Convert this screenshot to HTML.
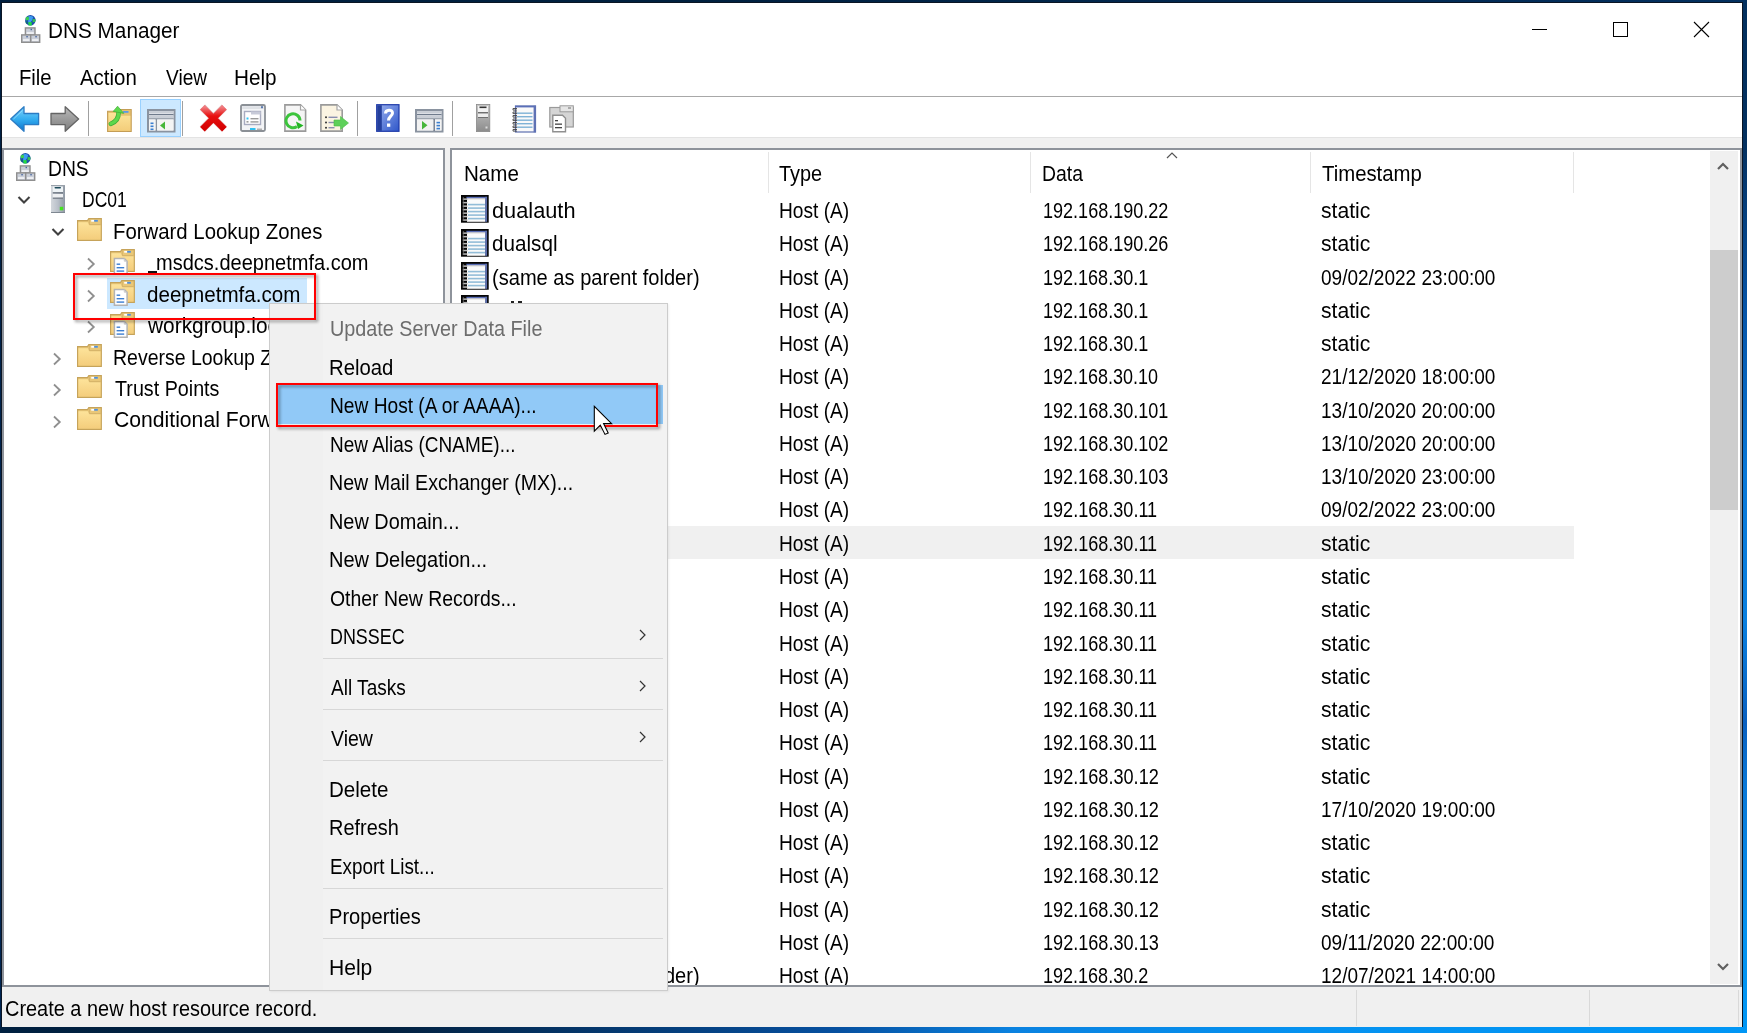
<!DOCTYPE html>
<html><head><meta charset="utf-8">
<style>
*{margin:0;padding:0;box-sizing:border-box}
html,body{width:1747px;height:1033px;overflow:hidden}
body{position:relative;background:linear-gradient(to bottom,#001f3f 0%,#002450 50%,#002552 100%);font-family:"Liberation Sans",sans-serif;color:#000}
.a{position:absolute}
.t{position:absolute;font-size:21.5px;line-height:20px;white-space:nowrap;transform-origin:0 0}
#win{position:absolute;left:2px;top:3px;width:1740px;height:1024px;background:#fff;overflow:hidden}
.vsep{position:absolute;width:1px;background:#a0a0a0}
.ricon{position:absolute;left:460.8px;width:28px;height:28px}
.hover{position:absolute;left:452px;width:1122px;height:33.3px;background:#f0f0f0}
.msep{position:absolute;left:323px;width:340px;height:1px;background:#d7d7d7}
</style></head><body>
<svg width="0" height="0" style="position:absolute">
<defs>
<symbol id="rec" viewBox="0 0 28 28">
 <rect x="0" y="0" width="27.7" height="27.7" fill="#050505"/>
 <rect x="5.4" y="1.8" width="20.6" height="1.8" fill="#5a6eb6"/>
 <rect x="24.1" y="1.8" width="2" height="25" fill="#5d6fae"/>
 <rect x="6" y="3.5" width="18.1" height="23.3" fill="#fbfbfb"/>
 <rect x="6" y="3.5" width="18.1" height="1.2" fill="#e3e3e3"/>
 <g fill="#93bdd8"><rect x="7" y="8.8" width="17" height="1.6"/><rect x="7" y="12.3" width="17" height="1.6"/><rect x="7" y="15.8" width="17" height="1.6"/><rect x="7" y="19.3" width="17" height="1.6"/><rect x="7" y="22.8" width="17" height="1.6"/></g>
 <g fill="#b9b9b9"><rect x="1.8" y="3.4" width="4.6" height="1.5"/><rect x="1.8" y="6.9" width="4.6" height="1.5"/><rect x="1.8" y="10.4" width="4.6" height="1.5"/><rect x="1.8" y="13.9" width="4.6" height="1.5"/><rect x="1.8" y="17.4" width="4.6" height="1.5"/><rect x="1.8" y="20.8" width="4.6" height="1.5"/><rect x="1.8" y="24.3" width="4.6" height="1.5"/></g>
 <rect x="1.8" y="2" width="1.2" height="24" fill="#7a7a7a" opacity="0.6"/>
</symbol>
<linearGradient id="gfold" x1="0" y1="0" x2="0" y2="1"><stop offset="0" stop-color="#fde39a"/><stop offset="1" stop-color="#f4cd7c"/></linearGradient>
<symbol id="folder" viewBox="0 0 25 23">
 <path d="M0.6 2.6 L10.5 2.6 L11.8 0.6 L24.3 0.6 L24.3 22.4 L0.6 22.4 Z" fill="#e9c778" stroke="#c6a35a" stroke-width="1.2"/>
 <path d="M1.4 4.2 L10.8 4.2 L12.6 7.2 L23.5 7.2 L23.5 21.6 L1.4 21.6 Z" fill="url(#gfold)"/>
 <path d="M12.3 1.2 L12.3 6.6 L23.6 6.6" fill="none" stroke="#d2b068" stroke-width="0.9"/>
 <rect x="14.2" y="1.9" width="3" height="1.8" fill="#fff"/>
 <rect x="17.2" y="1.9" width="3.6" height="1.8" fill="#4a90e2"/>
</symbol>
<symbol id="zone" viewBox="0 0 25 26">
 <path d="M0.6 2.6 L10.5 2.6 L11.8 0.6 L24.3 0.6 L24.3 22.4 L0.6 22.4 Z" fill="#e9c778" stroke="#c6a35a" stroke-width="1.2"/>
 <path d="M1.4 4.2 L10.8 4.2 L12.6 7.2 L23.5 7.2 L23.5 21.6 L1.4 21.6 Z" fill="url(#gfold)"/>
 <path d="M12.3 1.2 L12.3 6.6 L23.6 6.6" fill="none" stroke="#d2b068" stroke-width="0.9"/>
 <rect x="14.2" y="1.9" width="3" height="1.8" fill="#fff"/>
 <rect x="17.2" y="1.9" width="3.6" height="1.8" fill="#4a90e2"/>
 <path d="M4.4 9.4 L14.3 9.4 L17.1 12.2 L17.1 25.3 L4.4 25.3 Z" fill="#fff" stroke="#b3b3b3" stroke-width="1.5"/>
 <path d="M14.3 9.4 L14.3 12.2 L17.1 12.2" fill="none" stroke="#c8c8c8" stroke-width="1"/>
 <g fill="#3d7fd2"><rect x="6.6" y="14.5" width="3.6" height="1.4"/><rect x="6.6" y="18" width="7.6" height="1.4"/><rect x="6.6" y="21.4" width="7.6" height="1.4"/></g>
</symbol>
<symbol id="dnsico" viewBox="0 0 20 28">
 <circle cx="9.4" cy="5.3" r="5.2" fill="#1e4fae"/>
 <path d="M7.5 1.2 Q10.5 0.6 12.2 2 L11.2 5.2 Q9.6 6.2 9.6 8.2 L8 9.8 Q6.8 7.5 7.2 4.6 Z" fill="#3c9cf0"/>
 <path d="M4.6 2.6 L7.6 1.6 L8 4.8 L5 5.6 Z" fill="#3bd14e"/>
 <path d="M11.6 4 L14.5 4.3 L14.2 7 L11.6 7.2 Z" fill="#35c24e"/>
 <path d="M7.2 7.2 L10.6 7 L10.8 10.4 L7.6 10.4 Z" fill="#22dc3c"/>
 <path d="M4.3 6 L6.5 7 L6.2 9.2 L4.8 8.2Z" fill="#0f6a7a"/>
 <rect x="4.4" y="12.9" width="9.6" height="7.2" fill="#c9ced8" stroke="#8f8f8f" stroke-width="1.4"/>
 <rect x="5.6" y="17.4" width="7.2" height="1.3" fill="#fff"/>
 <rect x="9.6" y="13.8" width="1.3" height="1.4" fill="#3a5c98"/>
 <rect x="0.7" y="19.9" width="9" height="7.4" fill="#c9ced8" stroke="#8f8f8f" stroke-width="1.4"/>
 <rect x="9.7" y="19.9" width="9" height="7.4" fill="#c9ced8" stroke="#8f8f8f" stroke-width="1.4"/>
 <rect x="2" y="24.4" width="6.4" height="1.3" fill="#fff"/><rect x="11" y="24.4" width="6.4" height="1.3" fill="#fff"/>
 <rect x="5.4" y="21" width="1.3" height="1.4" fill="#3a5c98"/><rect x="14.4" y="21" width="1.3" height="1.4" fill="#3a5c98"/>
</symbol>
</defs></svg>

<div id="win"></div>

<!-- bottom desktop strip -->
<div class="a" style="left:0;top:0;width:1747px;height:2px;background:linear-gradient(to right,#001f3f 0%,#00203f 40%,#03305f 100%)"></div>
<div class="a" style="left:1px;top:2px;width:1742px;height:1025px;border:1px solid #0b1524;border-bottom:none"></div>
<div class="a" style="left:0;top:1027px;width:1747px;height:6px;background:linear-gradient(to right,#002040 0%,#03213f 22%,#0650a0 48%,#0a82e0 58%,#0592f0 75%,#0096f5 100%)"></div>
<div class="a" style="left:1743px;top:0;width:4px;height:1033px;background:linear-gradient(to bottom,#03305f 0%,#04305f 14%,#0654a8 30%,#0a78d8 46%,#0a80e0 60%,#0a60c0 70%,#0a78d8 76%,#0592f0 90%,#0096f5 100%)"></div>

<!-- title -->
<svg class="a" style="left:21px;top:15px;width:20px;height:28px"><use href="#dnsico"/></svg>
<div class="t" style="left:48.1px;top:21px;transform:scaleX(0.965);">DNS Manager</div><div class="t" style="left:19.4px;top:68px;transform:scaleX(0.942);">File</div><div class="t" style="left:79.9px;top:68px;transform:scaleX(0.950);">Action</div><div class="t" style="left:165.7px;top:68px;transform:scaleX(0.888);">View</div><div class="t" style="left:234.4px;top:68px;transform:scaleX(0.964);">Help</div>
<!-- window controls -->
<div class="a" style="left:1532px;top:29px;width:15px;height:1px;background:#000"></div>
<div class="a" style="left:1613px;top:22px;width:15px;height:15px;border:1px solid #000"></div>
<svg class="a" style="left:1693px;top:21px;width:17px;height:17px" viewBox="0 0 17 17"><path d="M1 1L16 16M16 1L1 16" stroke="#000" stroke-width="1.1"/></svg>

<!-- menubar line -->
<div class="a" style="left:2px;top:96px;width:1740px;height:1px;background:#a8a8a8"></div>
<!-- toolbar bottom -->
<div class="a" style="left:2px;top:137px;width:1740px;height:1px;background:#e3e3e3"></div>
<div class="a" style="left:2px;top:138px;width:1740px;height:10px;background:#f0f0f0"></div>
<!-- toolbar highlight button -->
<div class="a" style="left:140px;top:99px;width:41px;height:38px;background:#cce8ff;border:1px solid #99d1ff"></div>
<div class="vsep" style="left:88px;top:101px;height:35px"></div>
<div class="vsep" style="left:182px;top:101px;height:35px"></div>
<div class="vsep" style="left:357px;top:101px;height:35px"></div>
<div class="vsep" style="left:452px;top:101px;height:35px"></div>

<!-- left panel -->
<div class="a" style="left:2px;top:148px;width:443px;height:839px;border:2px solid #8e939b;background:#fff;overflow:hidden">
</div>
<div class="a" style="left:445px;top:148px;width:5px;height:839px;background:#f0f0f0"></div>
<!-- tree content -->
<div class="a" style="left:107px;top:278px;width:200px;height:31px;background:#cce8ff"></div>
<!-- ===== toolbar icons ===== -->
<svg class="a" style="left:10px;top:106px;width:30px;height:27px" viewBox="0 0 30 27">
 <defs><linearGradient id="gb" x1="0" y1="0" x2="0" y2="1"><stop offset="0" stop-color="#7fd3fb"/><stop offset="0.5" stop-color="#35aef0"/><stop offset="1" stop-color="#0a72cc"/></linearGradient></defs>
 <path d="M0.7 13 L14 0.8 L14 7.5 L28.6 7.5 L28.6 18.6 L14 18.6 L14 25.3 Z" fill="url(#gb)" stroke="#2c7cc4" stroke-width="1.3" stroke-linejoin="round"/>
 <path d="M3.5 13 L12.5 4.5" stroke="#9be0ff" stroke-width="1" opacity="0.7"/>
</svg>
<svg class="a" style="left:50px;top:106px;width:30px;height:27px" viewBox="0 0 30 27">
 <defs><linearGradient id="gg" x1="0" y1="0" x2="0" y2="1"><stop offset="0" stop-color="#b9b9b9"/><stop offset="1" stop-color="#7d7d7d"/></linearGradient></defs>
 <path d="M28.6 13 L15.2 0.8 L15.2 7.5 L1 7.5 L1 18.6 L15.2 18.6 L15.2 25.3 Z" fill="url(#gg)" stroke="#646464" stroke-width="1.3" stroke-linejoin="round"/>
</svg>
<!-- up folder -->
<svg class="a" style="left:107px;top:105px;width:25px;height:28px" viewBox="0 0 25 28">
 <defs><linearGradient id="gf" x1="0" y1="0" x2="0" y2="1"><stop offset="0" stop-color="#fde49a"/><stop offset="1" stop-color="#f3cd7a"/></linearGradient></defs>
 <path d="M0.6 6.3 L9 6.3 L10 4.5 L24.2 4.5 L24.2 26.5 L0.6 26.5 Z" fill="#e6c170" stroke="#c49d55" stroke-width="1.1"/>
 <path d="M1.5 8 L12.5 8 L14 10.8 L23.4 10.8 L23.4 25.8 L1.5 25.8 Z" fill="url(#gf)"/>
 <rect x="16" y="6" width="5.5" height="1.8" fill="#5a9ae8"/>
 <path d="M3.8 18.8 C8.5 17 11.8 13.5 11.6 7.2" stroke="#3fae38" stroke-width="4.6" fill="none" stroke-linecap="round"/><path d="M3.8 18.8 C8.5 17 11.8 13.5 11.6 7.2" stroke="#5fd84c" stroke-width="3.2" fill="none" stroke-linecap="round"/><path d="M10.6 1.2 L6.2 6.4 L16.8 8.4 Z" fill="#5fd84c" stroke="#3fae38" stroke-width="0.7"/>
</svg>
<!-- show/hide tree (highlighted) -->
<svg class="a" style="left:147px;top:109px;width:29px;height:24px" viewBox="0 0 29 24">
 <rect x="1" y="1" width="26.5" height="21.5" fill="#eef1f4" stroke="#8a93a0" stroke-width="2"/>
 <rect x="2" y="2" width="24.5" height="2.5" fill="#c9ced6"/>
 <rect x="2" y="5" width="24.5" height="1.2" fill="#6f7b8c"/>
 <rect x="2" y="6.5" width="24.5" height="2.5" fill="#c9ced6"/>
 <rect x="2" y="9.2" width="24.5" height="1.2" fill="#8a93a0"/>
 <rect x="8.5" y="10" width="1.6" height="12" fill="#8a93a0"/>
 <rect x="2" y="10.5" width="6.5" height="11" fill="#f4f4f4"/>
 <rect x="10.2" y="10.5" width="16.3" height="11" fill="#f4f4f4"/>
 <g fill="#3b7fd0"><rect x="3.5" y="13.5" width="3" height="1.6"/><rect x="3.5" y="16.5" width="3" height="1.6"/><rect x="3.5" y="19.5" width="3" height="1.6"/></g>
 <path d="M13 16.5 L18 12.5 L18 20.5 Z" fill="#47b63a"/>
</svg>
<!-- red X -->
<svg class="a" style="left:199px;top:104px;width:29px;height:28px" viewBox="0 0 29 28">
 <defs><linearGradient id="gx" x1="0" y1="0" x2="0" y2="1"><stop offset="0" stop-color="#f07a7e"/><stop offset="0.4" stop-color="#e81010"/><stop offset="1" stop-color="#d40000"/></linearGradient></defs>
 <path d="M3.4 3.2 L25.4 25.2 M25.4 3.2 L3.4 25.2" stroke="#a01818" stroke-width="7.4" stroke-linecap="butt" opacity="0.35"/>
 <path d="M3.4 3.2 L25.4 25.2 M25.4 3.2 L3.4 25.2" stroke="url(#gx)" stroke-width="6.4" stroke-linecap="butt"/>
</svg>
<!-- properties -->
<svg class="a" style="left:240px;top:104px;width:26px;height:28px" viewBox="0 0 26 28">
 <rect x="1" y="1" width="24" height="26" rx="1.5" fill="#f3f4f6" stroke="#8b9096" stroke-width="1.8"/>
 <rect x="2.2" y="2.2" width="21.6" height="2.8" fill="#dfe2e6"/>
 <rect x="21" y="2.2" width="2" height="2" fill="#5a7ab0"/>
 <rect x="4.5" y="7.5" width="16" height="13" fill="#fff" stroke="#a8acc0" stroke-width="1.4"/>
 <rect x="11" y="7.5" width="9.5" height="3" fill="#c7cad8"/>
 <rect x="6.5" y="13.5" width="2" height="2" fill="#30c6f6"/><rect x="10.5" y="14" width="8" height="1.4" fill="#9a9a9a"/>
 <rect x="6.5" y="17" width="2" height="1.6" fill="#9a9a9a"/><rect x="10.5" y="17.2" width="8" height="1.4" fill="#9a9a9a"/>
 <rect x="10" y="24" width="5.5" height="2" fill="#30c0f0"/><rect x="17" y="24.5" width="5" height="1.5" fill="#b0b0b0"/>
</svg>
<!-- refresh doc -->
<svg class="a" style="left:284px;top:104px;width:23px;height:28px" viewBox="0 0 23 28">
 <path d="M0.9 0.9 L16.5 0.9 L21.6 6 L21.6 27.1 L0.9 27.1 Z" fill="#f5f5f5" stroke="#9a9a9a" stroke-width="1.6"/>
 <path d="M16.5 0.9 L16.5 6 L21.6 6" fill="#fff" stroke="#a5a5a5" stroke-width="1.2"/>
 <path d="M13 22.5 A7 7 0 1 1 16 16.5" fill="none" stroke="#3cc43c" stroke-width="3"/>
 <path d="M12 17.5 L19.5 21.5 L14 25 Z" fill="#23b523"/>
</svg>
<!-- export list -->
<svg class="a" style="left:320px;top:104px;width:30px;height:28px" viewBox="0 0 30 28">
 <path d="M0.9 0.9 L17 0.9 L22.2 6 L22.2 27.1 L0.9 27.1 Z" fill="#fbf4e2" stroke="#9a9a9a" stroke-width="1.6"/>
 <path d="M17 0.9 L17 6 L22.2 6" fill="#fff" stroke="#a5a5a5" stroke-width="1.2"/>
 <g fill="#333"><circle cx="6" cy="13.3" r="1"/><circle cx="6" cy="18.5" r="1"/><circle cx="6" cy="23.8" r="1"/></g>
 <g fill="#8a8fb0"><rect x="8.5" y="12.6" width="9" height="1.4"/><rect x="8.5" y="17.8" width="6" height="1.4"/><rect x="8.5" y="23" width="6" height="1.4"/></g>
 <path d="M14 16 L20.5 16 L20.5 12.5 L28.5 19 L20.5 25.5 L20.5 22 L14 22 Z" fill="#5ed05a" stroke="#4bbd45" stroke-width="0.6"/>
</svg>
<!-- help -->
<svg class="a" style="left:376px;top:104px;width:24px;height:28px" viewBox="0 0 24 28">
 <defs><linearGradient id="gh" x1="0" y1="0" x2="1" y2="1"><stop offset="0" stop-color="#9db3ef"/><stop offset="1" stop-color="#2e56c9"/></linearGradient></defs>
 <rect x="0.7" y="0.7" width="22.3" height="26.6" fill="url(#gh)" stroke="#1e3aa8" stroke-width="1.2"/>
 <rect x="1.2" y="1.2" width="4.6" height="25.6" fill="#243f9c"/>
 <path d="M9.5 9.5 C9.5 5.5 16.5 5 16.5 9 C16.5 12 12.5 12.5 12.5 16.5" fill="none" stroke="#fff" stroke-width="3"/>
 <rect x="11" y="19.5" width="3.3" height="3.3" fill="#fff"/>
</svg>
<!-- action pane -->
<svg class="a" style="left:415px;top:109px;width:29px;height:24px" viewBox="0 0 29 24">
 <rect x="1" y="1" width="26.5" height="21.5" fill="#eef1f4" stroke="#8a93a0" stroke-width="2"/>
 <rect x="2" y="2" width="24.5" height="2.5" fill="#c9ced6"/>
 <rect x="2" y="5" width="24.5" height="1.2" fill="#6f7b8c"/>
 <rect x="2" y="6.5" width="24.5" height="2.5" fill="#c9ced6"/>
 <rect x="2" y="9.2" width="24.5" height="1.2" fill="#8a93a0"/>
 <rect x="18.3" y="10" width="1.6" height="12" fill="#6f7b8c"/>
 <rect x="2" y="10.5" width="16.3" height="11" fill="#f2f2f2"/>
 <rect x="20" y="10.5" width="6.5" height="11" fill="#f4f4f4"/>
 <g fill="#3b7fd0"><rect x="21.5" y="12.8" width="3.5" height="1.6"/><rect x="21.5" y="15.8" width="3.5" height="1.6"/><rect x="21.5" y="18.8" width="3.5" height="1.6"/></g>
 <path d="M7 12 L12.5 16.2 L7 20.5 Z" fill="#47b63a"/>
</svg>
<!-- server tower -->
<svg class="a" style="left:476px;top:104px;width:15px;height:28px" viewBox="0 0 15 28">
 <defs><linearGradient id="gs" x1="0" y1="0" x2="0" y2="1"><stop offset="0" stop-color="#c8c8c8"/><stop offset="1" stop-color="#8c8c8c"/></linearGradient></defs>
 <rect x="0.4" y="0.4" width="13.4" height="27.2" fill="url(#gs)" stroke="#8a8a8a" stroke-width="0.8"/>
 <rect x="2" y="2" width="10" height="6" fill="#f2f2f2"/><rect x="3.5" y="2.5" width="7" height="1.6" fill="#333"/>
 <rect x="2" y="8" width="10" height="1" fill="#707070"/>
 <rect x="2" y="10" width="10" height="3" fill="#ededed"/>
 <rect x="2" y="13" width="10" height="1" fill="#707070"/>
 <rect x="9.5" y="22.5" width="2" height="2" fill="#dcdcdc"/>
</svg>
<!-- notebook -->
<svg class="a" style="left:511px;top:105px;width:26px;height:28px" viewBox="0 0 26 28">
 <rect x="4.5" y="1" width="20" height="26" fill="#f9f9f9" stroke="#5c6fb0" stroke-width="1.2"/>
 <rect x="4" y="0.8" width="21" height="1.6" fill="#5a6fb8"/>
 <rect x="22.6" y="0.8" width="2.2" height="26.5" fill="#5f72b5"/>
 <g fill="#7fb2d6"><rect x="6" y="7.5" width="15.5" height="1.4"/><rect x="6" y="11" width="15.5" height="1.4"/><rect x="6" y="14.5" width="15.5" height="1.4"/><rect x="6" y="18" width="15.5" height="1.4"/><rect x="6" y="21.5" width="15.5" height="1.4"/></g>
 <g fill="none" stroke="#444" stroke-width="0.9"><path d="M6 3.5 h-4 v1.6 h4"/><path d="M6 7 h-4 v1.6 h4"/><path d="M6 10.5 h-4 v1.6 h4"/><path d="M6 14 h-4 v1.6 h4"/><path d="M6 17.5 h-4 v1.6 h4"/><path d="M6 21 h-4 v1.6 h4"/><path d="M6 24.5 h-4 v1.6 h4"/></g>
</svg>
<!-- copy -->
<svg class="a" style="left:549px;top:105px;width:26px;height:28px" viewBox="0 0 26 28">
 <rect x="0.8" y="2.5" width="23.5" height="19.5" fill="#d5d5d5" stroke="#9a9a9a" stroke-width="1.2"/>
 <rect x="11" y="0.8" width="13.3" height="6" fill="#e5e5e5" stroke="#9a9a9a" stroke-width="1"/>
 <rect x="19" y="2" width="3" height="2" fill="#aaa"/>
 <path d="M3.8 10.3 L13.5 10.3 L16.5 13.3 L16.5 26.8 L3.8 26.8 Z" fill="#fff" stroke="#8f8f8f" stroke-width="1.4"/>
 <g fill="#444"><rect x="6" y="15" width="3" height="1.3"/><rect x="6" y="18.5" width="7" height="1.3"/><rect x="6" y="22" width="7" height="1.3"/></g>
</svg>

<!-- ===== tree icons ===== -->
<svg class="a" style="left:16px;top:153px;width:20px;height:28px"><use href="#dnsico"/></svg>
<!-- chevrons -->
<svg class="a" style="left:17px;top:195px;width:14px;height:11px" viewBox="0 0 14 11"><path d="M1.5 2 L7 7.5 L12.5 2" fill="none" stroke="#404040" stroke-width="2.1"/></svg>
<svg class="a" style="left:51px;top:227px;width:14px;height:11px" viewBox="0 0 14 11"><path d="M1.5 2 L7 7.5 L12.5 2" fill="none" stroke="#404040" stroke-width="2.1"/></svg>
<svg class="a" style="left:86px;top:257px;width:11px;height:14px" viewBox="0 0 11 14"><path d="M2 1.5 L7.8 7 L2 12.5" fill="none" stroke="#8f8f8f" stroke-width="1.8"/></svg>
<svg class="a" style="left:86px;top:288.5px;width:11px;height:14px" viewBox="0 0 11 14"><path d="M2 1.5 L7.8 7 L2 12.5" fill="none" stroke="#8f8f8f" stroke-width="1.8"/></svg>
<svg class="a" style="left:86px;top:320px;width:11px;height:14px" viewBox="0 0 11 14"><path d="M2 1.5 L7.8 7 L2 12.5" fill="none" stroke="#8f8f8f" stroke-width="1.8"/></svg>
<svg class="a" style="left:52px;top:351.5px;width:11px;height:14px" viewBox="0 0 11 14"><path d="M2 1.5 L7.8 7 L2 12.5" fill="none" stroke="#8f8f8f" stroke-width="1.8"/></svg>
<svg class="a" style="left:52px;top:383px;width:11px;height:14px" viewBox="0 0 11 14"><path d="M2 1.5 L7.8 7 L2 12.5" fill="none" stroke="#8f8f8f" stroke-width="1.8"/></svg>
<svg class="a" style="left:52px;top:414.5px;width:11px;height:14px" viewBox="0 0 11 14"><path d="M2 1.5 L7.8 7 L2 12.5" fill="none" stroke="#8f8f8f" stroke-width="1.8"/></svg>
<!-- server -->
<svg class="a" style="left:51px;top:185px;width:14px;height:28px" viewBox="0 0 14 28">
 <defs><linearGradient id="gsv" x1="0" y1="0" x2="1" y2="0"><stop offset="0" stop-color="#d3d7dc"/><stop offset="0.5" stop-color="#b9c0c9"/><stop offset="1" stop-color="#8f98a3"/></linearGradient></defs>
 <rect x="0" y="0" width="14" height="28" fill="url(#gsv)"/>
 <rect x="0" y="0" width="14" height="1" fill="#9aa2ab"/><rect x="0" y="27" width="14" height="1" fill="#7e8791"/>
 <rect x="1.8" y="1.5" width="10.2" height="5.5" fill="#eef3f6"/>
 <rect x="3.5" y="2" width="6.5" height="1.6" rx="0.8" fill="#1d4a5a"/>
 <rect x="1.8" y="7.2" width="10.2" height="1.3" fill="#6d7580"/>
 <rect x="1.8" y="9" width="10.2" height="3.5" fill="#eef0f2"/>
 <rect x="1.8" y="12.6" width="10.2" height="1.3" fill="#7a828c"/>
 <rect x="8.8" y="21.8" width="3.4" height="3.5" fill="#44e41e"/>
</svg>
<svg class="a" style="left:77px;top:218px;width:25px;height:23px"><use href="#folder"/></svg><svg class="a" style="left:77px;top:343.8px;width:25px;height:23px"><use href="#folder"/></svg><svg class="a" style="left:77px;top:375.4px;width:25px;height:23px"><use href="#folder"/></svg><svg class="a" style="left:77px;top:406.6px;width:25px;height:23px"><use href="#folder"/></svg><svg class="a" style="left:110px;top:248.8px;width:25px;height:26px"><use href="#zone"/></svg><svg class="a" style="left:110px;top:280.1px;width:25px;height:26px"><use href="#zone"/></svg><svg class="a" style="left:110px;top:311.5px;width:25px;height:26px"><use href="#zone"/></svg>
<div class="t" style="left:47.5px;top:159px;transform:scaleX(0.896);">DNS</div><div class="t" style="left:81.6px;top:190px;transform:scaleX(0.815);">DC01</div><div class="t" style="left:113.4px;top:222px;transform:scaleX(0.947);">Forward Lookup Zones</div><div class="t" style="left:156.2px;top:253px;transform:scaleX(0.931);">msdcs.deepnetmfa.com</div><div class="t" style="left:147.2px;top:285px;transform:scaleX(0.958);">deepnetmfa.com</div><div class="t" style="left:148.2px;top:316px;transform:scaleX(0.971);">workgroup.local</div><div class="t" style="left:113.4px;top:348px;transform:scaleX(0.906);">Reverse Lookup Zones</div><div class="t" style="left:114.9px;top:379px;transform:scaleX(0.917);">Trust Points</div><div class="t" style="left:114.2px;top:410px;transform:scaleX(0.984);">Conditional Forwarders</div><div class="a" style="left:148px;top:271px;width:8.5px;height:1.6px;background:#111"></div>

<!-- right panel -->
<div class="a" style="left:450px;top:148px;width:1292px;height:839px;border:2px solid #8e939b;background:#fff"></div>
<div class="a" style="left:452px;top:150px;width:1258px;height:835px;overflow:hidden">
 <div style="position:absolute;left:-452px;top:-150px;width:1747px;height:1033px">
 <div class="a" style="left:768px;top:152px;width:1px;height:41px;background:#e5e5e5"></div>
 <div class="a" style="left:1030px;top:152px;width:1px;height:41px;background:#e5e5e5"></div>
 <div class="a" style="left:1310px;top:152px;width:1px;height:41px;background:#e5e5e5"></div>
 <div class="a" style="left:1573px;top:152px;width:1px;height:41px;background:#e5e5e5"></div>
 <svg class="a" style="left:1166px;top:152px;width:12px;height:7px" viewBox="0 0 12 7"><path d="M1 6L6 1L11 6" fill="none" stroke="#555" stroke-width="1.2"/></svg>
 <div class="t" style="left:463.7px;top:164px;transform:scaleX(0.957);">Name</div><div class="t" style="left:779.3px;top:164px;transform:scaleX(0.926);">Type</div><div class="t" style="left:1041.9px;top:164px;transform:scaleX(0.902);">Data</div><div class="t" style="left:1322.1px;top:164px;transform:scaleX(0.946);">Timestamp</div><svg class="ricon" style="top:195.4px"><use href="#rec"/></svg><div class="t" style="left:491.5px;top:201px;transform:scaleX(1.012);">dualauth</div><div class="t" style="left:779.3px;top:201px;transform:scaleX(0.891);">Host (A)</div><div class="t" style="left:1042.8px;top:201px;transform:scaleX(0.839);">192.168.190.22</div><div class="t" style="left:1321.2px;top:201px;transform:scaleX(0.982);">static</div><svg class="ricon" style="top:228.7px"><use href="#rec"/></svg><div class="t" style="left:491.5px;top:234px;transform:scaleX(0.961);">dualsql</div><div class="t" style="left:779.3px;top:234px;transform:scaleX(0.891);">Host (A)</div><div class="t" style="left:1042.8px;top:234px;transform:scaleX(0.839);">192.168.190.26</div><div class="t" style="left:1321.2px;top:234px;transform:scaleX(0.982);">static</div><svg class="ricon" style="top:261.9px"><use href="#rec"/></svg><div class="t" style="left:491.5px;top:268px;transform:scaleX(0.934);">(same as parent folder)</div><div class="t" style="left:779.3px;top:268px;transform:scaleX(0.891);">Host (A)</div><div class="t" style="left:1042.8px;top:268px;transform:scaleX(0.838);">192.168.30.1</div><div class="t" style="left:1321.2px;top:268px;transform:scaleX(0.884);">09/02/2022 23:00:00</div><svg class="ricon" style="top:295.2px"><use href="#rec"/></svg><div class="a" style="left:511px;top:301px;width:3px;height:2px;background:#222"></div><div class="a" style="left:518px;top:301px;width:4px;height:2px;background:#222"></div><div class="t" style="left:779.3px;top:301px;transform:scaleX(0.891);">Host (A)</div><div class="t" style="left:1042.8px;top:301px;transform:scaleX(0.838);">192.168.30.1</div><div class="t" style="left:1321.2px;top:301px;transform:scaleX(0.982);">static</div><svg class="ricon" style="top:328.5px"><use href="#rec"/></svg><div class="t" style="left:491.5px;top:334px;transform:scaleX(0.975);">dc02</div><div class="t" style="left:779.3px;top:334px;transform:scaleX(0.891);">Host (A)</div><div class="t" style="left:1042.8px;top:334px;transform:scaleX(0.838);">192.168.30.1</div><div class="t" style="left:1321.2px;top:334px;transform:scaleX(0.982);">static</div><svg class="ricon" style="top:361.8px"><use href="#rec"/></svg><div class="t" style="left:491.5px;top:367px;transform:scaleX(0.948);">eset</div><div class="t" style="left:779.3px;top:367px;transform:scaleX(0.891);">Host (A)</div><div class="t" style="left:1042.8px;top:367px;transform:scaleX(0.836);">192.168.30.10</div><div class="t" style="left:1321.2px;top:367px;transform:scaleX(0.884);">21/12/2020 18:00:00</div><svg class="ricon" style="top:395.0px"><use href="#rec"/></svg><div class="t" style="left:491.5px;top:401px;transform:scaleX(0.971);">exch</div><div class="t" style="left:779.3px;top:401px;transform:scaleX(0.891);">Host (A)</div><div class="t" style="left:1042.8px;top:401px;transform:scaleX(0.839);">192.168.30.101</div><div class="t" style="left:1321.2px;top:401px;transform:scaleX(0.884);">13/10/2020 20:00:00</div><svg class="ricon" style="top:428.3px"><use href="#rec"/></svg><div class="t" style="left:491.5px;top:434px;transform:scaleX(0.965);">exch2</div><div class="t" style="left:779.3px;top:434px;transform:scaleX(0.891);">Host (A)</div><div class="t" style="left:1042.8px;top:434px;transform:scaleX(0.839);">192.168.30.102</div><div class="t" style="left:1321.2px;top:434px;transform:scaleX(0.884);">13/10/2020 20:00:00</div><svg class="ricon" style="top:461.6px"><use href="#rec"/></svg><div class="t" style="left:491.5px;top:467px;transform:scaleX(0.965);">exch3</div><div class="t" style="left:779.3px;top:467px;transform:scaleX(0.891);">Host (A)</div><div class="t" style="left:1042.8px;top:467px;transform:scaleX(0.839);">192.168.30.103</div><div class="t" style="left:1321.2px;top:467px;transform:scaleX(0.884);">13/10/2020 23:00:00</div><svg class="ricon" style="top:494.8px"><use href="#rec"/></svg><div class="t" style="left:492.3px;top:500px;transform:scaleX(0.948);">fs01</div><div class="t" style="left:779.3px;top:500px;transform:scaleX(0.891);">Host (A)</div><div class="t" style="left:1042.8px;top:500px;transform:scaleX(0.840);">192.168.30.11</div><div class="t" style="left:1321.2px;top:500px;transform:scaleX(0.884);">09/02/2022 23:00:00</div><div class="hover" style="top:526.0px"></div><svg class="ricon" style="top:528.1px"><use href="#rec"/></svg><div class="t" style="left:492.3px;top:534px;transform:scaleX(0.948);">fs02</div><div class="t" style="left:779.3px;top:534px;transform:scaleX(0.891);">Host (A)</div><div class="t" style="left:1042.8px;top:534px;transform:scaleX(0.840);">192.168.30.11</div><div class="t" style="left:1321.2px;top:534px;transform:scaleX(0.982);">static</div><svg class="ricon" style="top:561.4px"><use href="#rec"/></svg><div class="t" style="left:492.3px;top:567px;transform:scaleX(0.948);">fs03</div><div class="t" style="left:779.3px;top:567px;transform:scaleX(0.891);">Host (A)</div><div class="t" style="left:1042.8px;top:567px;transform:scaleX(0.840);">192.168.30.11</div><div class="t" style="left:1321.2px;top:567px;transform:scaleX(0.982);">static</div><svg class="ricon" style="top:594.6px"><use href="#rec"/></svg><div class="t" style="left:492.3px;top:600px;transform:scaleX(0.928);">fs04</div><div class="t" style="left:779.3px;top:600px;transform:scaleX(0.891);">Host (A)</div><div class="t" style="left:1042.8px;top:600px;transform:scaleX(0.840);">192.168.30.11</div><div class="t" style="left:1321.2px;top:600px;transform:scaleX(0.982);">static</div><svg class="ricon" style="top:627.9px"><use href="#rec"/></svg><div class="t" style="left:492.3px;top:634px;transform:scaleX(0.948);">fs05</div><div class="t" style="left:779.3px;top:634px;transform:scaleX(0.891);">Host (A)</div><div class="t" style="left:1042.8px;top:634px;transform:scaleX(0.840);">192.168.30.11</div><div class="t" style="left:1321.2px;top:634px;transform:scaleX(0.982);">static</div><svg class="ricon" style="top:661.2px"><use href="#rec"/></svg><div class="t" style="left:492.3px;top:667px;transform:scaleX(0.948);">fs06</div><div class="t" style="left:779.3px;top:667px;transform:scaleX(0.891);">Host (A)</div><div class="t" style="left:1042.8px;top:667px;transform:scaleX(0.840);">192.168.30.11</div><div class="t" style="left:1321.2px;top:667px;transform:scaleX(0.982);">static</div><svg class="ricon" style="top:694.5px"><use href="#rec"/></svg><div class="t" style="left:492.3px;top:700px;transform:scaleX(0.948);">fs07</div><div class="t" style="left:779.3px;top:700px;transform:scaleX(0.891);">Host (A)</div><div class="t" style="left:1042.8px;top:700px;transform:scaleX(0.840);">192.168.30.11</div><div class="t" style="left:1321.2px;top:700px;transform:scaleX(0.982);">static</div><svg class="ricon" style="top:727.7px"><use href="#rec"/></svg><div class="t" style="left:492.3px;top:733px;transform:scaleX(0.948);">fs08</div><div class="t" style="left:779.3px;top:733px;transform:scaleX(0.891);">Host (A)</div><div class="t" style="left:1042.8px;top:733px;transform:scaleX(0.840);">192.168.30.11</div><div class="t" style="left:1321.2px;top:733px;transform:scaleX(0.982);">static</div><svg class="ricon" style="top:761.0px"><use href="#rec"/></svg><div class="t" style="left:492.4px;top:767px;transform:scaleX(0.944);">ws01</div><div class="t" style="left:779.3px;top:767px;transform:scaleX(0.891);">Host (A)</div><div class="t" style="left:1042.8px;top:767px;transform:scaleX(0.842);">192.168.30.12</div><div class="t" style="left:1321.2px;top:767px;transform:scaleX(0.982);">static</div><svg class="ricon" style="top:794.3px"><use href="#rec"/></svg><div class="t" style="left:492.4px;top:800px;transform:scaleX(0.944);">ws02</div><div class="t" style="left:779.3px;top:800px;transform:scaleX(0.891);">Host (A)</div><div class="t" style="left:1042.8px;top:800px;transform:scaleX(0.842);">192.168.30.12</div><div class="t" style="left:1321.2px;top:800px;transform:scaleX(0.884);">17/10/2020 19:00:00</div><svg class="ricon" style="top:827.5px"><use href="#rec"/></svg><div class="t" style="left:492.4px;top:833px;transform:scaleX(0.944);">ws03</div><div class="t" style="left:779.3px;top:833px;transform:scaleX(0.891);">Host (A)</div><div class="t" style="left:1042.8px;top:833px;transform:scaleX(0.842);">192.168.30.12</div><div class="t" style="left:1321.2px;top:833px;transform:scaleX(0.982);">static</div><svg class="ricon" style="top:860.8px"><use href="#rec"/></svg><div class="t" style="left:492.4px;top:866px;transform:scaleX(0.944);">ws04</div><div class="t" style="left:779.3px;top:866px;transform:scaleX(0.891);">Host (A)</div><div class="t" style="left:1042.8px;top:866px;transform:scaleX(0.842);">192.168.30.12</div><div class="t" style="left:1321.2px;top:866px;transform:scaleX(0.982);">static</div><svg class="ricon" style="top:894.1px"><use href="#rec"/></svg><div class="t" style="left:492.4px;top:900px;transform:scaleX(0.944);">ws05</div><div class="t" style="left:779.3px;top:900px;transform:scaleX(0.891);">Host (A)</div><div class="t" style="left:1042.8px;top:900px;transform:scaleX(0.842);">192.168.30.12</div><div class="t" style="left:1321.2px;top:900px;transform:scaleX(0.982);">static</div><svg class="ricon" style="top:927.3px"><use href="#rec"/></svg><div class="t" style="left:492.4px;top:933px;transform:scaleX(0.944);">ws06</div><div class="t" style="left:779.3px;top:933px;transform:scaleX(0.891);">Host (A)</div><div class="t" style="left:1042.8px;top:933px;transform:scaleX(0.842);">192.168.30.13</div><div class="t" style="left:1321.2px;top:933px;transform:scaleX(0.886);">09/11/2020 22:00:00</div><svg class="ricon" style="top:960.6px"><use href="#rec"/></svg><div class="t" style="left:491.5px;top:966px;transform:scaleX(0.934);">(same as parent folder)</div><div class="t" style="left:779.3px;top:966px;transform:scaleX(0.891);">Host (A)</div><div class="t" style="left:1042.8px;top:966px;transform:scaleX(0.838);">192.168.30.2</div><div class="t" style="left:1321.2px;top:966px;transform:scaleX(0.884);">12/07/2021 14:00:00</div>
 </div>
</div>
<!-- scrollbar -->
<div class="a" style="left:1710px;top:151px;width:28px;height:833px;background:#f0f0f0"></div>
<div class="a" style="left:1710px;top:250px;width:28px;height:260px;background:#cdcdcd"></div>
<svg class="a" style="left:1716px;top:161px;width:14px;height:10px" viewBox="0 0 14 10"><path d="M2 8L7 3L12 8" fill="none" stroke="#606060" stroke-width="2.2"/></svg>
<svg class="a" style="left:1716px;top:962px;width:14px;height:10px" viewBox="0 0 14 10"><path d="M2 2L7 7L12 2" fill="none" stroke="#606060" stroke-width="2.2"/></svg>

<!-- status bar -->
<div class="a" style="left:2px;top:987px;width:1740px;height:40px;background:#f0f0f0"></div>
<div class="a" style="left:1356px;top:990px;width:1px;height:36px;background:#d9d9d9"></div>
<div class="a" style="left:1589px;top:990px;width:1px;height:36px;background:#d9d9d9"></div>
<div class="a" style="left:1738px;top:990px;width:1px;height:36px;background:#d9d9d9"></div>
<div class="t" style="left:5.2px;top:999px;transform:scaleX(0.927);">Create a new host resource record.</div>

<!-- context menu -->
<div class="a" style="left:269px;top:303px;width:399px;height:688px;background:#f2f2f2;border:1px solid #cccccc;box-shadow:1px 1px 2px rgba(0,0,0,0.06)"></div>
<div class="a" style="left:270px;top:304px;width:53px;height:686px;background:#f0f0f0"></div>
<div class="a" style="left:277px;top:385px;width:386px;height:39px;background:#91c9f7"></div>
<div class="msep" style="top:658px"></div>
<div class="msep" style="top:709px"></div>
<div class="msep" style="top:760px"></div>
<div class="msep" style="top:888px"></div>
<div class="msep" style="top:938px"></div>
<div class="t" style="left:330.2px;top:319px;color:#6d6d6d;transform:scaleX(0.921);">Update Server Data File</div><div class="t" style="left:329.4px;top:358px;transform:scaleX(0.945);">Reload</div><div class="t" style="left:330.2px;top:396px;transform:scaleX(0.891);">New Host (A or AAAA)...</div><div class="t" style="left:330.2px;top:435px;transform:scaleX(0.882);">New Alias (CNAME)...</div><div class="t" style="left:329.4px;top:473px;transform:scaleX(0.912);">New Mail Exchanger (MX)...</div><div class="t" style="left:329.4px;top:512px;transform:scaleX(0.925);">New Domain...</div><div class="t" style="left:329.4px;top:550px;transform:scaleX(0.932);">New Delegation...</div><div class="t" style="left:330.2px;top:589px;transform:scaleX(0.903);">Other New Records...</div><div class="t" style="left:330.2px;top:627px;transform:scaleX(0.833);">DNSSEC</div><div class="t" style="left:331.0px;top:678px;transform:scaleX(0.886);">All Tasks</div><div class="t" style="left:331.0px;top:729px;transform:scaleX(0.907);">View</div><div class="t" style="left:329.4px;top:780px;transform:scaleX(0.957);">Delete</div><div class="t" style="left:329.4px;top:818px;transform:scaleX(0.927);">Refresh</div><div class="t" style="left:330.2px;top:857px;transform:scaleX(0.877);">Export List...</div><div class="t" style="left:329.4px;top:907px;transform:scaleX(0.936);">Properties</div><div class="t" style="left:329.4px;top:958px;transform:scaleX(0.980);">Help</div>
<svg class="a" style="left:638px;top:628px;width:10px;height:14px" viewBox="0 0 10 14"><path d="M2 2L7 7L2 12" fill="none" stroke="#333" stroke-width="1.2"/></svg>
<svg class="a" style="left:638px;top:679px;width:10px;height:14px" viewBox="0 0 10 14"><path d="M2 2L7 7L2 12" fill="none" stroke="#333" stroke-width="1.2"/></svg>
<svg class="a" style="left:638px;top:730px;width:10px;height:14px" viewBox="0 0 10 14"><path d="M2 2L7 7L2 12" fill="none" stroke="#333" stroke-width="1.2"/></svg>

<!-- red annotation boxes -->
<div class="a" style="left:73px;top:273px;width:243px;height:47px;border:2px solid #ff0000;filter:drop-shadow(2px 2px 1.5px rgba(0,0,0,0.4))"></div>
<div class="a" style="left:276px;top:383px;width:382px;height:44px;border:2px solid #ff0000;filter:drop-shadow(2px 2px 1.5px rgba(0,0,0,0.4))"></div>

<!-- cursor -->
<svg class="a" style="left:593px;top:405px;width:22px;height:32px" viewBox="0 0 22 32"><path d="M1.3 1.3 L1.3 26.1 L7.3 20.1 L12 29.4 L15.2 27.9 L10.6 18.6 L18.6 18.6 Z" fill="#fff" stroke="#000" stroke-width="1.1" stroke-linejoin="miter"/></svg>
</body></html>
